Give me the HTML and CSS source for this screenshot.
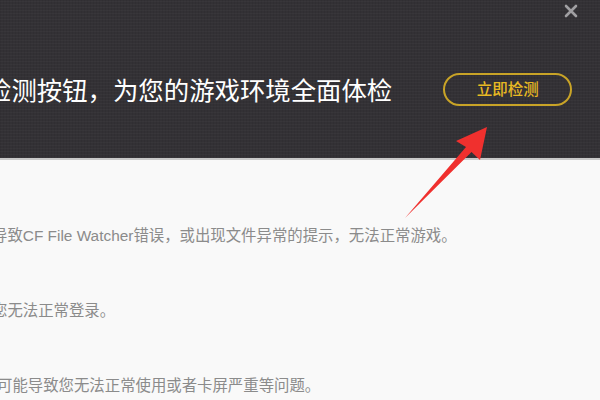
FILE: index.html
```html
<!DOCTYPE html>
<html lang="zh-CN">
<head>
<meta charset="utf-8">
<link rel="stylesheet" href="styles.css">
</head>
<body>
<div class="page">
  <header class="banner">
    <h1 class="title">检测按钮，为您的游戏环境全面体检</h1>
    <button class="check-btn">立即检测</button>
    <svg class="close" width="14" height="14" viewBox="0 0 14 14"><path d="M2 2 L12 12 M12 2 L2 12" stroke="#a09fa2" stroke-width="2.6" stroke-linecap="round"/></svg>
  </header>
  <main class="content">
    <p class="line line-1">导致CF File Watcher错误，或出现文件异常的提示，无法正常游戏。</p>
    <p class="line line-2">您无法正常登录。</p>
    <p class="line line-3">可能导致您无法正常使用或者卡屏严重等问题。</p>
  </main>
  <svg class="arrow" width="600" height="400" viewBox="0 0 600 400"><polygon points="487,127 480,160 471.5,152 405,218 466,147 456,141" fill="#f0302e"/></svg>
</div>
</body>
</html>
```
FILE: styles.css
```css
* { box-sizing: border-box; }
html, body { margin: 0; padding: 0; }
body {
  width: 600px;
  height: 400px;
  overflow: hidden;
  background: #f9f9f9;
  font-family: "Liberation Sans", Arial, "Noto Sans CJK SC", sans-serif;
}
.page { position: relative; width: 600px; height: 400px; overflow: hidden; }
.banner {
  position: relative;
  height: 160px;
  padding-top: 20px;
  background-color: #333135;
  background-image:
    repeating-linear-gradient(0deg, rgba(255,255,255,0.025) 0 1px, transparent 1px 3px),
    repeating-linear-gradient(90deg, rgba(0,0,0,0.06) 0 1px, transparent 1px 3px);
  border-bottom: 2px solid #c9c9c9;
  display: flex;
  align-items: center;
}
.title {
  margin: 0 0 0 -14px;
  font-family: "Noto Sans CJK SC", sans-serif;
  font-weight: 400;
  font-size: 25.4px;
  color: #ffffff;
  white-space: nowrap;
}
.check-btn {
  margin-left: 51px;
  width: 129px;
  height: 33px;
  border: 2px solid #c9a427;
  border-radius: 17px;
  background: transparent;
  color: #e8b923;
  font-family: "Noto Sans CJK SC", sans-serif;
  font-size: 15.5px;
  font-weight: 500;
  padding: 0;
  line-height: 1;
}
.close { position: absolute; top: 4px; right: 22px; }
.content {
  padding-top: 66px;
  display: flex;
  flex-direction: column;
  gap: 55px;
}
.line {
  margin: 0;
  font-size: 15.4px;
  line-height: 20px;
  color: #8b8b8b;
  white-space: nowrap;
}
.line-1 { margin-left: -8px; }
.line-2 { margin-left: -8px; }
.line-3 { margin-left: -3px; }
.arrow { position: absolute; left: 0; top: 0; }
```
